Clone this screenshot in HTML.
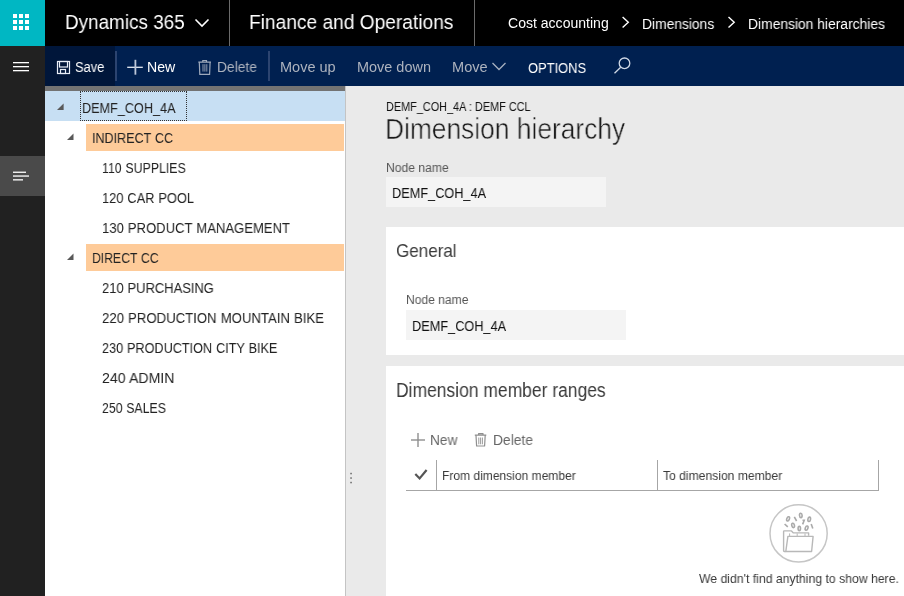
<!DOCTYPE html>
<html><head><meta charset="utf-8">
<style>
*{margin:0;padding:0;box-sizing:border-box}
html,body{width:904px;height:596px;overflow:hidden;background:#fff;font-family:"Liberation Sans",sans-serif}
.a{position:absolute}
.t{position:absolute;white-space:pre;line-height:1;will-change:transform}
svg{position:absolute;overflow:visible}
</style></head><body>
<!-- top bar -->
<div class="a" style="left:0;top:0;width:904px;height:46px;background:#000"></div>
<div class="a" style="left:0;top:0;width:45px;height:46px;background:#00b7c3"></div>
<svg style="left:0;top:0" width="45" height="46">
 <g fill="#fff">
  <rect x="13" y="14" width="4" height="4"/><rect x="19" y="14" width="4" height="4"/><rect x="25" y="14" width="4" height="4"/>
  <rect x="13" y="20" width="4" height="4"/><rect x="19" y="20" width="4" height="4"/><rect x="25" y="20" width="4" height="4"/>
  <rect x="13" y="26" width="4" height="4"/><rect x="19" y="26" width="4" height="4"/><rect x="25" y="26" width="4" height="4"/>
 </g>
</svg>
<svg style="left:0;top:0" width="904" height="46">
 <polyline points="195.5,19.5 202,26 208.5,19.5" fill="none" stroke="#fff" stroke-width="1.6"/>
 <rect x="229" y="0" width="1" height="46" fill="#6b6b6b"/>
 <rect x="474" y="0" width="1" height="46" fill="#6b6b6b"/>
 <polyline points="622.6,16.9 628.3,22.2 622.6,27.5" fill="none" stroke="#fff" stroke-width="1.4"/>
 <polyline points="728.5,16.9 734.2,22.2 728.5,27.5" fill="none" stroke="#fff" stroke-width="1.4"/>
</svg>

<!-- left nav -->
<div class="a" style="left:0;top:46px;width:45px;height:550px;background:#212121"></div>
<div class="a" style="left:0;top:156px;width:45px;height:40px;background:#4a4a4a"></div>
<svg style="left:0;top:0" width="45" height="596">
 <g fill="#fff">
  <rect x="13" y="62" width="16" height="1.3"/><rect x="13" y="66" width="16" height="1.3"/><rect x="13" y="70" width="16" height="1.3"/>
  <rect x="13" y="171.6" width="13" height="1.3"/><rect x="13" y="175.4" width="16" height="1.3"/><rect x="13" y="179.2" width="10" height="1.3"/>
 </g>
</svg>

<!-- toolbar -->
<div class="a" style="left:45px;top:46px;width:859px;height:40px;background:#002050"></div>
<div class="a" style="left:45px;top:46px;width:70px;height:40px;background:#00163a"></div>
<svg style="left:0;top:0" width="904" height="90">
 <g fill="none" stroke="#e8eef8" stroke-width="1.2">
  <rect x="57.5" y="61.5" width="12" height="12"/>
  <rect x="59.5" y="61.5" width="8" height="5.5"/>
  <rect x="60.5" y="69.5" width="5" height="4"/>
 </g>
 <rect x="115" y="51" width="2" height="30" fill="#2c4470"/>
 <rect x="268" y="51" width="2" height="30" fill="#2c4470"/>
 <g stroke="#e6ebf3" stroke-width="1.3"><line x1="127.2" y1="67.3" x2="142.8" y2="67.3"/></g><g stroke="#bcc7d9" stroke-width="1.8"><line x1="135.4" y1="59.8" x2="135.4" y2="74.7"/></g>
 <g fill="none" stroke="#9ea9bb" stroke-width="1.2">
  <path d="M198.3,62.2 H211 M202.8,62.2 V60.5 H206.5 V62.2 M199.3,62.2 L199.8,74.3 H209.6 L210.1,62.2"/>
  <path d="M203,64.2 V71.6 M204.9,64.2 V71.6 M206.8,64.2 V71.6" stroke-width="0.9"/>
 </g>
 <polyline points="492.5,63 499,69.5 505.5,63" fill="none" stroke="#a6b0c0" stroke-width="1.3"/>
 <g fill="none" stroke="#cfd8e6" stroke-width="1.3"><circle cx="624.5" cy="63.3" r="5.3"/><line x1="620.7" y1="67.2" x2="614.5" y2="73.2"/></g>
</svg>

<!-- tree panel -->
<div class="a" style="left:45px;top:86px;width:300px;height:5px;background:#737373"></div>
<div class="a" style="left:45px;top:91px;width:300px;height:30px;background:#c7dff3"></div>
<div class="a" style="left:80px;top:91px;width:107px;height:30px;border:1px dotted #333"></div>
<div class="a" style="left:86px;top:124px;width:258px;height:27px;background:#fecb99"></div>
<div class="a" style="left:86px;top:244px;width:258px;height:27px;background:#fecb99"></div>
<svg style="left:0;top:0" width="345" height="300">
 <g fill="#595959">
  <polygon points="63.6,103.5 63.6,110 57,110"/>
  <polygon points="73.5,133.5 73.5,140 67,140"/>
  <polygon points="73.5,253.5 73.5,260 67,260"/>
 </g>
</svg>

<!-- right panel -->
<div class="a" style="left:345px;top:86px;width:1px;height:510px;background:#c4c4c4"></div>
<div class="a" style="left:346px;top:86px;width:558px;height:510px;background:#eaeaea"></div>
<svg style="left:0;top:0" width="904" height="596">
 <g fill="#666"><rect x="350.3" y="472.8" width="1.5" height="1.5"/><rect x="350.3" y="477.3" width="1.5" height="1.5"/><rect x="350.3" y="481.8" width="1.5" height="1.5"/></g>
</svg>
<div class="a" style="left:386px;top:177px;width:220px;height:30px;background:#f4f4f4"></div>

<div class="a" style="left:386px;top:227px;width:518px;height:128px;background:#fff"></div>
<div class="a" style="left:406px;top:310px;width:220px;height:30px;background:#f4f4f4"></div>

<div class="a" style="left:386px;top:366px;width:518px;height:230px;background:#fff"></div>
<svg style="left:0;top:0" width="904" height="596">
 <g stroke="#8f8f8f" stroke-width="1.4"><line x1="411" y1="440" x2="425" y2="440"/><line x1="418" y1="433" x2="418" y2="447"/></g>
 <g fill="none" stroke="#8f8f8f" stroke-width="1.2" stroke-linejoin="round">
  <path d="M474.8,435.2 H486.3 M478.6,435.2 V433.6 H483 V435.2 M476,435.2 L476.6,446 H484.6 L485.2,435.2"/>
  <path d="M478.8,437.5 V444.3 M480.6,437.5 V444.3 M482.4,437.5 V444.3" stroke-width="0.9"/>
 </g>
 <rect x="406" y="490" width="473" height="1" fill="#a6a6a6"/>
 <rect x="436" y="460" width="1" height="30" fill="#a6a6a6"/>
 <rect x="657" y="460" width="1" height="30" fill="#a6a6a6"/>
 <rect x="878" y="460" width="1" height="31" fill="#a6a6a6"/>
 <polyline points="415.3,474 419.6,478.4 426.6,470" fill="none" stroke="#555" stroke-width="2.2"/>
 <circle cx="798.6" cy="533.4" r="28.6" fill="none" stroke="#c6c6c6" stroke-width="1.5"/>
 <g fill="none" stroke="#b8b8b8" stroke-width="1.4" stroke-linejoin="round">
  <path d="M785.8,551.5 H784.3 Q783.6,551.5 783.6,550.8 V531.6 Q783.6,530.9 784.3,530.9 H791.5 L793.4,532.9 H808.6 V535.8"/>
  <path d="M785.8,551.5 L787.9,536.4 H813.1 L811.6,551.5 Z"/>
  <path d="M789.6,536 V533.4 M797.2,536 V533.4 M805,536 V533.4" stroke-width="1"/>
 </g>
 <g fill="none" stroke="#aaa" stroke-width="1.6">
  <ellipse cx="788.1" cy="518.9" rx="1.3" ry="2.2" transform="rotate(20 788.1 518.9)"/>
  <line x1="794.3" y1="516.8" x2="796.6" y2="521" />
  <ellipse cx="800.8" cy="515.4" rx="1.3" ry="2.2" transform="rotate(-5 800.8 515.4)"/>
  <ellipse cx="809.2" cy="519.3" rx="1.3" ry="2.2" transform="rotate(10 809.2 519.3)"/>
  <line x1="784.6" y1="524" x2="787.8" y2="526.9" />
  <ellipse cx="793.1" cy="525.4" rx="1.3" ry="2.2" transform="rotate(-15 793.1 525.4)"/>
  <path d="M802.5,520.3 H804.2 L802.6,524.4"/>
  <ellipse cx="799.3" cy="528.5" rx="1.2" ry="2.1"/>
  <ellipse cx="806.6" cy="528.1" rx="1.3" ry="2.2" transform="rotate(20 806.6 528.1)"/>
  <line x1="811.2" y1="524" x2="812.8" y2="528.6" />
 </g>
</svg>
<div class="t" style="left:64.6px;top:11.9px;font-size:20.5px;transform:scaleX(0.9215);transform-origin:0 0;color:#fff;">Dynamics 365</div>
<div class="t" style="left:249.2px;top:11.9px;font-size:20.5px;transform:scaleX(0.9342);transform-origin:0 0;color:#fff;">Finance and Operations</div>
<div class="t" style="left:508.2px;top:16.0px;font-size:14px;transform:scaleX(1.0034);transform-origin:0 0;color:#fff;">Cost accounting</div>
<div class="t" style="left:642.2px;top:16.6px;font-size:14px;transform:scaleX(0.9873);transform-origin:0 0;color:#fff;">Dimensions</div>
<div class="t" style="left:748.0px;top:16.6px;font-size:14px;transform:scaleX(0.9889);transform-origin:0 0;color:#fff;">Dimension hierarchies</div>
<div class="t" style="left:75.4px;top:60.0px;font-size:14px;transform:scaleX(0.9241);transform-origin:0 0;color:#fff;">Save</div>
<div class="t" style="left:147.4px;top:60.0px;font-size:14px;transform:scaleX(1.008);transform-origin:0 0;color:#fff;">New</div>
<div class="t" style="left:217.2px;top:60.0px;font-size:14px;transform:scaleX(0.9859);transform-origin:0 0;color:#adb3be;">Delete</div>
<div class="t" style="left:279.8px;top:60.0px;font-size:14px;transform:scaleX(1.0367);transform-origin:0 0;color:#adb3be;">Move up</div>
<div class="t" style="left:356.6px;top:60.0px;font-size:14px;transform:scaleX(1.0325);transform-origin:0 0;color:#adb3be;">Move down</div>
<div class="t" style="left:451.6px;top:60.0px;font-size:14px;transform:scaleX(1.0402);transform-origin:0 0;color:#adb3be;">Move</div>
<div class="t" style="left:527.8px;top:60.8px;font-size:14.5px;transform:scaleX(0.8924);transform-origin:0 0;color:#fff;">OPTIONS</div>
<div class="t" style="left:81.9px;top:101.0px;font-size:14.3px;transform:scaleX(0.8845);transform-origin:0 0;color:#222;word-spacing:0.5px">DEMF_COH_4A</div>
<div class="t" style="left:92.0px;top:131.0px;font-size:14.3px;transform:scaleX(0.8777);transform-origin:0 0;color:#222;word-spacing:0.5px">INDIRECT CC</div>
<div class="t" style="left:102.0px;top:161.0px;font-size:14.3px;transform:scaleX(0.8608);transform-origin:0 0;color:#222;word-spacing:0.5px">110 SUPPLIES</div>
<div class="t" style="left:102.0px;top:191.0px;font-size:14.3px;transform:scaleX(0.8957);transform-origin:0 0;color:#222;word-spacing:0.5px">120 CAR POOL</div>
<div class="t" style="left:102.0px;top:221.0px;font-size:14.3px;transform:scaleX(0.9136);transform-origin:0 0;color:#222;word-spacing:0.5px">130 PRODUCT MANAGEMENT</div>
<div class="t" style="left:91.8px;top:251.0px;font-size:14.3px;transform:scaleX(0.8529);transform-origin:0 0;color:#222;word-spacing:0.5px">DIRECT CC</div>
<div class="t" style="left:102.0px;top:281.0px;font-size:14.3px;transform:scaleX(0.9044);transform-origin:0 0;color:#222;word-spacing:0.5px">210 PURCHASING</div>
<div class="t" style="left:102.3px;top:311.0px;font-size:14.3px;transform:scaleX(0.9209);transform-origin:0 0;color:#222;word-spacing:0.5px">220 PRODUCTION MOUNTAIN BIKE</div>
<div class="t" style="left:102.3px;top:341.0px;font-size:14.3px;transform:scaleX(0.8845);transform-origin:0 0;color:#222;word-spacing:0.5px">230 PRODUCTION CITY BIKE</div>
<div class="t" style="left:102.0px;top:370.9px;font-size:14.3px;transform:scaleX(0.9836);transform-origin:0 0;color:#222;word-spacing:0.5px">240 ADMIN</div>
<div class="t" style="left:102.0px;top:401.0px;font-size:14.3px;transform:scaleX(0.8575);transform-origin:0 0;color:#222;word-spacing:0.5px">250 SALES</div>
<div class="t" style="left:385.9px;top:101.0px;font-size:12.5px;transform:scaleX(0.8709);transform-origin:0 0;color:#111;">DEMF_COH_4A : DEMF CCL</div>
<div class="t" style="left:385.0px;top:114.7px;font-size:29px;transform:scaleX(0.9085);transform-origin:0 0;color:#1a1a1a;-webkit-text-stroke:0.5px #eaeaea">Dimension hierarchy</div>
<div class="t" style="left:385.7px;top:161.5px;font-size:12.5px;transform:scaleX(0.9702);transform-origin:0 0;color:#555;">Node name</div>
<div class="t" style="left:391.6px;top:186.1px;font-size:14.5px;transform:scaleX(0.8779);transform-origin:0 0;color:#111;">DEMF_COH_4A</div>
<div class="t" style="left:395.7px;top:240.6px;font-size:19px;transform:scaleX(0.8971);transform-origin:0 0;color:#3a3a3a;">General</div>
<div class="t" style="left:405.9px;top:294.4px;font-size:12.5px;transform:scaleX(0.9662);transform-origin:0 0;color:#555;">Node name</div>
<div class="t" style="left:411.6px;top:319.1px;font-size:14.5px;transform:scaleX(0.8783);transform-origin:0 0;color:#111;">DEMF_COH_4A</div>
<div class="t" style="left:395.5px;top:381.3px;font-size:19.5px;transform:scaleX(0.8957);transform-origin:0 0;color:#3a3a3a;">Dimension member ranges</div>
<div class="t" style="left:429.9px;top:433.3px;font-size:14px;transform:scaleX(0.9772);transform-origin:0 0;color:#666;">New</div>
<div class="t" style="left:492.8px;top:433.3px;font-size:14px;transform:scaleX(0.9872);transform-origin:0 0;color:#666;">Delete</div>
<div class="t" style="left:441.8px;top:468.9px;font-size:13px;transform:scaleX(0.9255);transform-origin:0 0;color:#3a3a3a;">From dimension member</div>
<div class="t" style="left:663.0px;top:469.0px;font-size:13px;transform:scaleX(0.9327);transform-origin:0 0;color:#3a3a3a;">To dimension member</div>
<div class="t" style="left:698.8px;top:571.8px;font-size:13px;transform:scaleX(0.9402);transform-origin:0 0;color:#3a3a3a;">We didn't find anything to show here.</div>
</body></html>
